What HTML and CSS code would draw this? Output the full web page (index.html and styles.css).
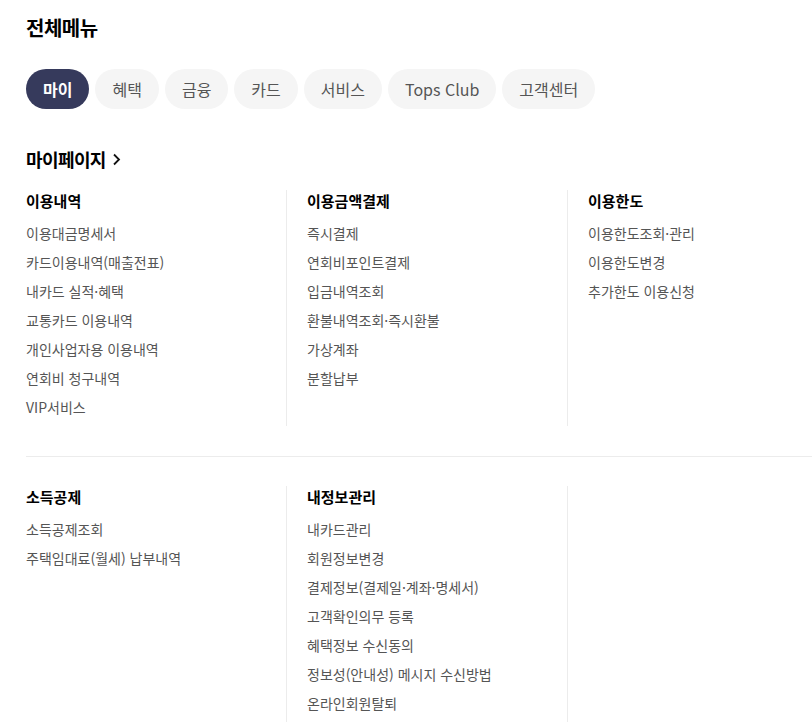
FILE: index.html
```html
<!DOCTYPE html>
<html lang="ko">
<head>
<meta charset="utf-8">
<title>전체메뉴</title>
<link rel="stylesheet" href="styles.css">
</head>
<body>
<div class="wrap">
  <h1 class="title">전체메뉴</h1>
  <nav class="tabs">
    <a class="tab active">마이</a>
    <a class="tab">혜택</a>
    <a class="tab">금융</a>
    <a class="tab">카드</a>
    <a class="tab">서비스</a>
    <a class="tab">Tops Club</a>
    <a class="tab">고객센터</a>
  </nav>
  <section class="menu">
    <h2 class="menu-title">마이페이지<svg class="chev" width="9" height="13" viewBox="0 0 9 13"><polyline points="2,1.5 7,6.5 2,11.5" fill="none" stroke="#111" stroke-width="1.8"/></svg></h2>
    <div class="row">
      <div class="col">
        <h3 class="col-title">이용내역</h3>
        <ul class="list">
          <li>이용대금명세서</li>
          <li>카드이용내역(매출전표)</li>
          <li>내카드 실적·혜택</li>
          <li>교통카드 이용내역</li>
          <li>개인사업자용 이용내역</li>
          <li>연회비 청구내역</li>
          <li>VIP서비스</li>
        </ul>
      </div>
      <div class="col">
        <h3 class="col-title">이용금액결제</h3>
        <ul class="list">
          <li>즉시결제</li>
          <li>연회비포인트결제</li>
          <li>입금내역조회</li>
          <li>환불내역조회·즉시환불</li>
          <li>가상계좌</li>
          <li>분할납부</li>
        </ul>
      </div>
      <div class="col">
        <h3 class="col-title">이용한도</h3>
        <ul class="list">
          <li>이용한도조회·관리</li>
          <li>이용한도변경</li>
          <li>추가한도 이용신청</li>
        </ul>
      </div>
    </div>
    <div class="divider"></div>
    <div class="row">
      <div class="col">
        <h3 class="col-title">소득공제</h3>
        <ul class="list">
          <li>소득공제조회</li>
          <li>주택임대료(월세) 납부내역</li>
        </ul>
      </div>
      <div class="col">
        <h3 class="col-title">내정보관리</h3>
        <ul class="list">
          <li>내카드관리</li>
          <li>회원정보변경</li>
          <li>결제정보(결제일·계좌·명세서)</li>
          <li>고객확인의무 등록</li>
          <li>혜택정보 수신동의</li>
          <li>정보성(안내성) 메시지 수신방법</li>
          <li>온라인회원탈퇴</li>
        </ul>
      </div>
      <div class="col"></div>
    </div>
  </section>
</div>
</body>
</html>
```

FILE: styles.css
```css
* { box-sizing: border-box; }
html, body { margin: 0; padding: 0; background: #fff; overflow: hidden; }
body {
  font-family: "Noto Sans CJK KR", "Noto Sans", sans-serif;
  color: #111;
}
.wrap { padding: 14px 0 0 26px; }
.title {
  margin: 0;
  font-size: 20px;
  line-height: 28px;
  font-weight: 700;
  letter-spacing: -0.5px;
  color: #000;
}
.tabs {
  display: flex;
  gap: 6px;
  margin-top: 27px;
}
.tab {
  display: flex;
  align-items: center;
  height: 40px;
  padding: 0 17px;
  border-radius: 20px;
  background: #f5f5f5;
  color: #555;
  font-size: 16px;
  white-space: nowrap;
}
.tab.active {
  background: #363a5c;
  color: #fff;
  font-weight: 700;
}
.menu { margin-top: 37px; }
.menu-title {
  display: flex;
  align-items: center;
  gap: 6px;
  margin: 0 0 18px;
  font-size: 18px;
  line-height: 26px;
  font-weight: 700;
  letter-spacing: -0.6px;
  color: #000;
}
.chev { display: block; }
.row { display: flex; }
.col {
  flex: none;
  width: 281px;
  padding: 0 20px 4px;
  border-left: 1px solid #ececec;
}
.col:first-child {
  width: 260px;
  padding-left: 0;
  border-left: none;
}
.col:last-child {
  flex: 1 1 auto;
  width: auto;
  min-width: 0;
}
.col-title {
  margin: 0 0 7px;
  font-size: 15px;
  line-height: 22px;
  font-weight: 700;
  color: #000;
}
.list {
  list-style: none;
  margin: 0;
  padding: 0;
}
.list li {
  font-size: 14px;
  line-height: 29px;
  color: #555;
  white-space: nowrap;
}
.divider {
  height: 1px;
  background: #ececec;
  margin: 30px 0 29px;
}
```
